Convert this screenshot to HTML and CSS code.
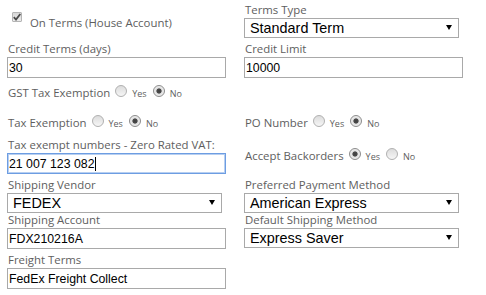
FILE: index.html
```html
<!DOCTYPE html>
<html>
<head>
<meta charset="utf-8">
<link rel="stylesheet" href="styles.css">
</head>
<body>
<div class="form">
  <div class="row row-a">
    <div class="cell">
      <div class="check-line">
        <span class="checkbox"><svg width="8" height="8" viewBox="0 0 8 8"><path d="M0.8 4.2 L3 6.6 L7.3 1" fill="none" stroke="#4a4a4a" stroke-width="1.8"/></svg></span>
        <span class="check-text">On Terms (House Account)</span>
      </div>
    </div>
    <div class="cell field field-a">
      <div class="label">Terms Type</div>
      <div class="select"><span>Standard Term</span><span class="arrow"></span></div>
    </div>
  </div>

  <div class="row row-b">
    <div class="cell field">
      <div class="label">Credit Terms (days)</div>
      <div class="input">30</div>
    </div>
    <div class="cell field">
      <div class="label">Credit Limit</div>
      <div class="input">10000</div>
    </div>
  </div>

  <div class="row row-c">
    <div class="cell radio-line"><span class="rl-text">GST Tax Exemption</span><span class="radio"></span><span class="opt">Yes</span><span class="radio on"></span><span class="opt">No</span></div>
    <div class="cell"></div>
  </div>

  <div class="row row-d">
    <div class="cell radio-line"><span class="rl-text">Tax Exemption</span><span class="radio"></span><span class="opt">Yes</span><span class="radio on"></span><span class="opt">No</span></div>
    <div class="cell radio-line"><span class="rl-text">PO Number</span><span class="radio"></span><span class="opt">Yes</span><span class="radio on"></span><span class="opt">No</span></div>
  </div>

  <div class="row row-e">
    <div class="cell field">
      <div class="label">Tax exempt numbers - Zero Rated VAT:</div>
      <div class="input focused">21 007 123 082<span class="caret"></span></div>
    </div>
    <div class="cell radio-line backorders"><span class="rl-text">Accept Backorders</span><span class="radio on"></span><span class="opt">Yes</span><span class="radio"></span><span class="opt">No</span></div>
  </div>

  <div class="row row-f">
    <div class="cell field">
      <div class="label">Shipping Vendor</div>
      <div class="select"><span>FEDEX</span><span class="arrow"></span></div>
    </div>
    <div class="cell field">
      <div class="label">Preferred Payment Method</div>
      <div class="select"><span>American Express</span><span class="arrow"></span></div>
    </div>
  </div>

  <div class="row row-g">
    <div class="cell field">
      <div class="label">Shipping Account</div>
      <div class="input">FDX210216A</div>
    </div>
    <div class="cell field">
      <div class="label">Default Shipping Method</div>
      <div class="select"><span>Express Saver</span><span class="arrow"></span></div>
    </div>
  </div>

  <div class="row row-h">
    <div class="cell field">
      <div class="label">Freight Terms</div>
      <div class="input">FedEx Freight Collect</div>
    </div>
    <div class="cell"></div>
  </div>
</div>
</body>
</html>
```

FILE: styles.css
```css
html, body {
  margin: 0;
  background: #ffffff;
}
body {
  font-family: "Open Sans", sans-serif;
  color: #5e5e5e;
}
.form {
  padding-left: 7px;
}
.row {
  display: flex;
  gap: 18px;
  align-items: flex-start;
}
.cell {
  width: 219px;
  flex: none;
}
.row-a { height: 38px; }
.row-b { margin-top: 4px; }
.row-c { margin-top: 7px; height: 16px; }
.row-d { margin-top: 14px; height: 16px; }
.row-e { margin-top: 7px; }
.row-f { margin-top: 4px; }
.row-g { margin-top: 0; }
.row-h { margin-top: 4px; }

.field-a { padding-top: 3px; }

.label {
  font-size: 11.4px;
  line-height: 13px;
  height: 13px;
  margin: 0 0 2px 1px;
  white-space: nowrap;
}

.input {
  box-sizing: border-box;
  height: 21px;
  width: 219px;
  border: 1px solid #a9a9a9;
  font-family: "Liberation Sans", Arial, sans-serif;
  font-size: 12.3px;
  color: #000;
  padding: 0 1px;
  display: flex;
  align-items: center;
  white-space: nowrap;
}
.input.focused {
  border-color: #6d9de2;
  box-shadow: inset 0 0 0 1px #b7cff1;
}
.caret {
  display: inline-block;
  width: 1px;
  height: 14px;
  background: #000;
  margin-left: 1px;
}

.select {
  box-sizing: border-box;
  width: 215px;
  height: 20px;
  border: 1px solid #a9a9a9;
  font-family: "Liberation Sans", Arial, sans-serif;
  font-size: 14.4px;
  color: #000;
  padding: 0 6px 1px 5px;
  display: flex;
  align-items: center;
  justify-content: space-between;
  white-space: nowrap;
}
.arrow {
  width: 0;
  height: 0;
  border-left: 3px solid transparent;
  border-right: 3px solid transparent;
  border-top: 5px solid #000;
}

.check-line {
  display: flex;
  align-items: flex-start;
}
.checkbox {
  box-sizing: border-box;
  width: 10px;
  height: 10px;
  margin: 12px 0 0 5px;
  border: 1px solid #b4b4b4;
  border-radius: 1px;
  background: linear-gradient(#d8d8d8, #ececec);
  display: flex;
  align-items: center;
  justify-content: center;
}
.checkbox svg { display: block; }
.check-text {
  font-size: 11.4px;
  line-height: 13px;
  margin: 16px 0 0 8px;
  white-space: nowrap;
}

.radio-line {
  font-size: 11.4px;
  line-height: 14px;
  white-space: nowrap;
}
.rl-text { margin-left: 1px; }
.radio {
  display: inline-block;
  box-sizing: border-box;
  width: 12px;
  height: 12px;
  border-radius: 50%;
  border: 1px solid #b0b0b0;
  background: linear-gradient(#dcdcdc, #f6f6f6);
  vertical-align: baseline;
  margin-left: 5px;
  position: relative;
}
.radio.on {
  border-color: #8c8c8c;
  background: radial-gradient(circle, #3f3f3f 0, #4a4a4a 2.2px, #e0e0e0 3px, #f4f4f4 6px);
}
.opt {
  font-size: 9px;
  margin-left: 5px;
}
.opt + .radio { margin-left: 6px; }
.backorders { padding-top: 10px; }
```
